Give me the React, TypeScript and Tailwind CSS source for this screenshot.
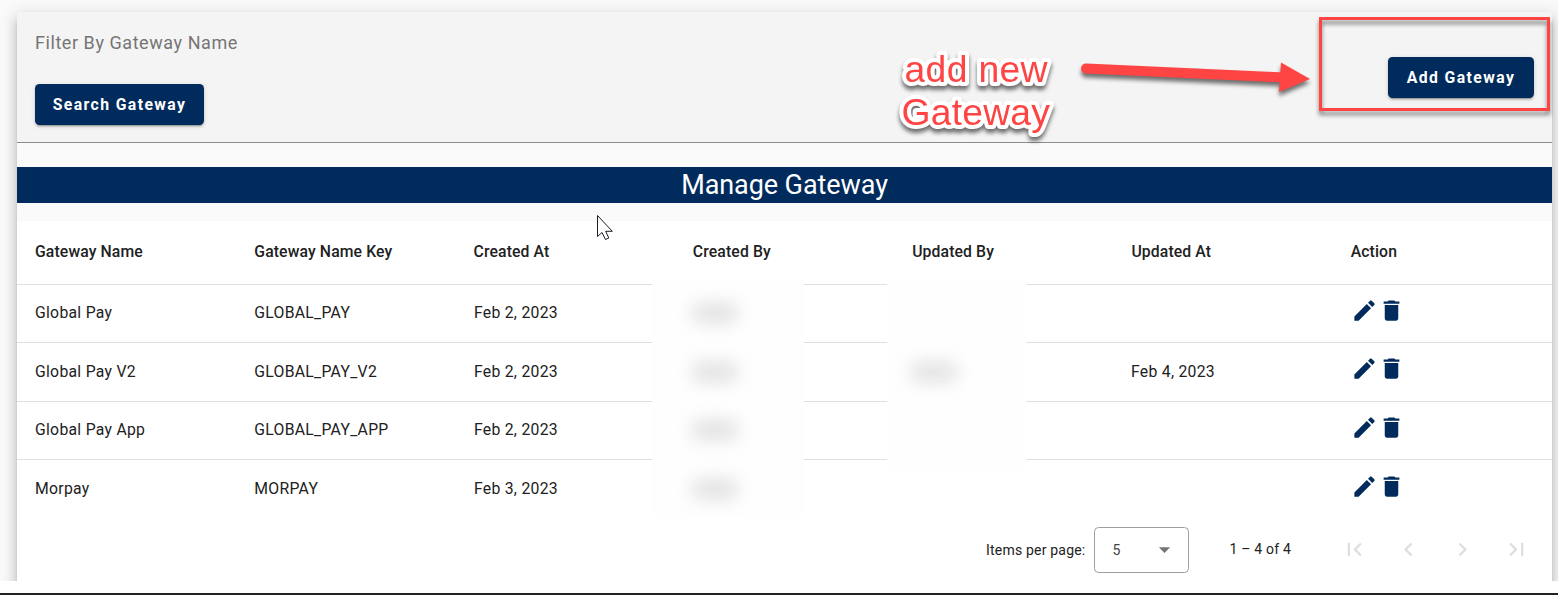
import React from "react";
import {
  MdArrowDropDown,
  MdChevronLeft,
  MdChevronRight,
  MdDelete,
  MdEdit,
  MdFirstPage,
  MdLastPage,
} from "react-icons/md";

type Gateway = {
  name: string;
  key: string;
  createdAt: string;
  createdByHidden: boolean;
  updatedByHidden: boolean;
  updatedAt: string;
};

const columns = [
  "Gateway Name",
  "Gateway Name Key",
  "Created At",
  "Created By",
  "Updated By",
  "Updated At",
  "Action",
];

const gateways: Gateway[] = [
  { name: "Global Pay", key: "GLOBAL_PAY", createdAt: "Feb 2, 2023", createdByHidden: true, updatedByHidden: false, updatedAt: "" },
  { name: "Global Pay V2", key: "GLOBAL_PAY_V2", createdAt: "Feb 2, 2023", createdByHidden: true, updatedByHidden: true, updatedAt: "Feb 4, 2023" },
  { name: "Global Pay App", key: "GLOBAL_PAY_APP", createdAt: "Feb 2, 2023", createdByHidden: true, updatedByHidden: false, updatedAt: "" },
  { name: "Morpay", key: "MORPAY", createdAt: "Feb 3, 2023", createdByHidden: true, updatedByHidden: false, updatedAt: "" },
];

function PrimaryButton({ children, className }: { children: React.ReactNode; className: string }) {
  return (
    <button
      className={`flex h-[41px] items-center justify-center rounded-[4.5px] bg-[#002b5c] text-[15.75px] font-bold tracking-[1.41px] text-white shadow-[0_3px_1px_-2px_rgba(0,0,0,0.2),0_2px_2px_0_rgba(0,0,0,0.14),0_1px_5px_0_rgba(0,0,0,0.12)] ${className}`}
    >
      {children}
    </button>
  );
}

function Smudge() {
  return <div className="h-[18px] w-[46px] rounded-[8px] bg-[#dedede] blur-[9px]" />;
}

function Row({ gateway, last }: { gateway: Gateway; last: boolean }) {
  return (
    <div
      className={`grid h-[58.5px] grid-cols-7 items-center text-[15.75px] tracking-[0.28px] text-[#212121] ${last ? "" : "border-b border-[#e0e0e0]"}`}
    >
      <div className="pl-[18px]">{gateway.name}</div>
      <div className="pl-[18px]">{gateway.key}</div>
      <div className="pl-[18.4px]">{gateway.createdAt}</div>
      <div className="relative z-10 pl-[17px]">{gateway.createdByHidden && <Smudge />}</div>
      <div className="relative z-10 pl-[17px]">{gateway.updatedByHidden && <Smudge />}</div>
      <div className="pl-[17.6px]">{gateway.updatedAt}</div>
      <div className="flex pb-[6px] pl-[18.4px] text-[27px] text-[#002b5c]">
        <MdEdit />
        <MdDelete />
      </div>
    </div>
  );
}

function Paginator() {
  return (
    <div className="flex h-[62px] items-center justify-end pr-[9px] text-[14px] tracking-[0.2px] text-[#212121]">
      <span className="mr-[9px] pt-[2px]">Items per page:</span>
      <div className="flex h-[46px] w-[95px] items-center justify-between rounded-[4.5px] border border-[#9e9e9e] pr-[10px] pl-[17px] text-[#444]">
        <span className="pt-[2px]">5</span>
        <MdArrowDropDown className="text-[27px] text-[#757575]" />
      </div>
      <span className="mr-[36px] ml-[40px]">1 – 4 of 4</span>
      <div className="flex text-[27px] text-[#dedede]">
        <span className="flex w-[54px] justify-center"><MdFirstPage /></span>
        <span className="flex w-[54px] justify-center"><MdChevronLeft /></span>
        <span className="flex w-[54px] justify-center"><MdChevronRight /></span>
        <span className="flex w-[54px] justify-center"><MdLastPage /></span>
      </div>
    </div>
  );
}

function Annotations() {
  return (
    <>
      <svg
        className="absolute top-[40px] left-[877px] font-['Liberation_Sans',Arial,sans-serif] text-[37.33px] drop-shadow-[0_4px_2px_rgba(0,0,0,0.55)]"
        width="200"
        height="110"
        viewBox="877 40 200 110"
      >
        <g fill="#ff4444" stroke="#fff" strokeWidth="8" strokeLinejoin="round" paintOrder="stroke">
          <text x="904.5" y="82" textLength="143">add new</text>
          <text x="901.5" y="125" textLength="148.5">Gateway</text>
        </g>
      </svg>
      <svg
        className="absolute top-[50px] left-[1070px] drop-shadow-[0_4px_2px_rgba(0,0,0,0.55)]"
        width="250"
        height="60"
        viewBox="1070 50 250 60"
      >
        <path d="M1086 68.5L1285 77.5" stroke="#ff4444" strokeWidth="10" strokeLinecap="round" />
        <path d="M1281 62.5L1310 79L1279 92Z" fill="#ff4444" />
      </svg>
      <div className="absolute top-[17px] left-[1319px] h-[94px] w-[231px] border-[3px] border-[#ff4444] drop-shadow-[0_4px_2px_rgba(0,0,0,0.5)]" />
      <svg className="absolute top-[214px] left-[596px]" width="18" height="28" viewBox="0 0 18 28">
        <path
          d="M1.5 1.5V22.5L6 18.5L9.5 25.5L12.8 24L9.7 17.3H16.3Z"
          fill="#fff"
          stroke="#1c1c24"
          strokeWidth="1"
        />
      </svg>
    </>
  );
}

export default function App() {
  return (
    <div className="relative flex h-[595px] w-[1558px] flex-col overflow-hidden bg-white font-[Roboto,sans-serif]">
      <div className="h-[581px] overflow-hidden bg-[#fafafa] pt-[12px] pr-[6px] pl-[17px]">
        <main className="h-[640px] bg-white shadow-[0_6px_6px_-3px_rgba(0,0,0,0.2),0_9px_11px_1px_rgba(0,0,0,0.14),0_3px_16px_2px_rgba(0,0,0,0.12)]">
          <header className="flex h-[131px] justify-between border-b border-[#8c8c8c] bg-[#f4f4f4] pr-[18px] pl-[18px]">
            <div className="flex flex-col pt-[17px]">
              <label className="h-[55px] text-[18px] leading-[27px] tracking-[0.56px] text-[#757575]">
                Filter By Gateway Name
              </label>
              <PrimaryButton className="w-[169px]">Search Gateway</PrimaryButton>
            </div>
            <div className="pt-[45px]">
              <PrimaryButton className="w-[146px]">Add Gateway</PrimaryButton>
            </div>
          </header>
          <div className="bg-[#fafafa] pt-[24px] pb-[18px]">
            <h1 className="h-[36px] bg-[#002b5c] text-center text-[27px] leading-[36px] font-normal tracking-[-0.08px] text-white">
              Manage Gateway
            </h1>
          </div>
          <section className="relative">
            <div className="grid h-[63.5px] grid-cols-7 items-center border-b border-[#e0e0e0] pb-px text-[15.75px] font-medium tracking-[0.12px] text-[#212121]">
              {columns.map((column) => (
                <div key={column} className="pl-[18px]">{column}</div>
              ))}
            </div>
            <div className="absolute top-[57px] left-[635px] h-[240px] w-[152px] bg-[#fefefe]" />
            <div className="absolute top-[57px] left-[870px] h-[197px] w-[139px] bg-[#fefefe]" />
            {gateways.map((gateway, index) => (
              <Row key={gateway.key} gateway={gateway} last={index === gateways.length - 1} />
            ))}
          </section>
          <Paginator />
        </main>
      </div>
      <div className="mt-[12px] h-[2px] bg-[#222]" />
      <Annotations />
    </div>
  );
}
